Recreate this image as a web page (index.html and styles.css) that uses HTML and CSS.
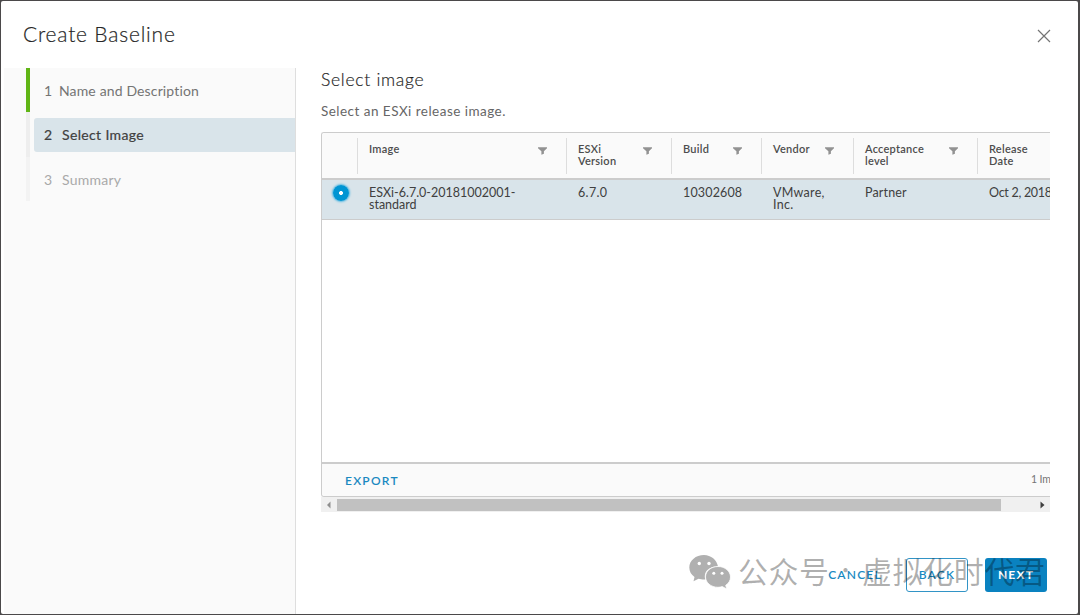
FILE: index.html
```
<!DOCTYPE html>
<html lang="en">
<head>
<meta charset="utf-8">
<title>Create Baseline</title>
<link rel="stylesheet" href="styles.css">
</head>
<body>
<svg width="0" height="0" class="defs">
  <symbol id="filter" viewBox="0 0 9 8"><path d="M0 0.300h9v1L5.900 4.200v2.600L3.400 7.800V4.200L0 1.300z" fill="#929292"/></symbol>
</svg>
<div class="modal">
  <header class="head">
    <h1 class="title">Create Baseline</h1>
    <svg class="close" width="14" height="14" viewBox="0 0 14 14"><path d="M1 1l12 12M13 1L1 13" stroke="#747474" stroke-width="1.2" fill="none"/></svg>
  </header>
  <div class="body">
    <nav class="side">
      <div class="step done"><div class="item"><span class="num">1</span><span class="t-name">Name and Description</span></div></div>
      <div class="step current"><div class="item"><span class="num">2</span><span class="t-select">Select Image</span></div></div>
      <div class="step todo"><div class="item"><span class="num">3</span><span class="t-summary">Summary</span></div></div>
    </nav>
    <main class="main">
      <h2 class="subtitle">Select image</h2>
      <p class="desc">Select an ESXi release image.</p>
      <section class="grid">
        <div class="row thead">
          <div class="cell c0"></div>
          <div class="cell c1"><span>Image</span><svg class="f"><use href="#filter"/></svg></div>
          <div class="cell c2"><span>ESXi<br>Version</span><svg class="f"><use href="#filter"/></svg></div>
          <div class="cell c3"><span>Build</span><svg class="f"><use href="#filter"/></svg></div>
          <div class="cell c4"><span>Vendor</span><svg class="f"><use href="#filter"/></svg></div>
          <div class="cell c5"><span>Acceptance<br>level</span><svg class="f"><use href="#filter"/></svg></div>
          <div class="cell c6"><span>Release<br>Date</span></div>
        </div>
        <div class="row data">
          <div class="cell c0"><i class="radio"></i></div>
          <div class="cell c1"><span>ESXi-6.7.0-20181002001-<br>standard</span></div>
          <div class="cell c2"><span>6.7.0</span></div>
          <div class="cell c3"><span>10302608</span></div>
          <div class="cell c4"><span>VMware,<br>Inc.</span></div>
          <div class="cell c5"><span>Partner</span></div>
          <div class="cell c6"><span>Oct 2, 2018</span></div>
        </div>
        <div class="space"></div>
        <div class="gfoot"><a class="export">EXPORT</a><span class="count">1 Image</span></div>
      </section>
      <div class="scroll">
        <svg width="15" height="15" viewBox="0 0 15 15"><path d="M9.500 4.500v7L6 8z" fill="#8f8f8f"/></svg>
        <div class="thumb"></div>
        <svg width="15" height="15" viewBox="0 0 15 15"><path d="M5.500 4.500v7L9.500 8z" fill="#404040"/></svg>
      </div>
      <footer class="actions">
        <a class="btn cancel">CANCEL</a>
        <a class="btn back">BACK</a>
        <a class="btn next">NEXT</a>
      </footer>
    </main>
  </div>
</div>
<div class="mark">
  <svg width="42" height="35" viewBox="0 0 42 35">
    <path d="M15 0C6.800 0 .3 5.500.3 12.500c0 4 2 7.200 5.200 9.500L4.500 26.200l5-2.400c2 .6 4 .9 6.800.8C14 17 20 11 29 11.500 28 5 22 0 15 0z" fill="#b0b0b0"/>
    <path d="M29 11.500c-7 0-12.500 4.600-12.500 10.400S22 32.300 29 32.300c1.500 0 3-.3 4.300-.7l4.400 2.400-1-3.700c3-2 4.800-4.800 4.800-8.300C41.500 16.300 36 11.500 29 11.500z" fill="#b0b0b0" stroke="#fff" stroke-width=".8"/>
    <g fill="#fff"><circle cx="10.300" cy="8.500" r="1.700"/><circle cx="20" cy="8.500" r="1.700"/><circle cx="24.800" cy="18.300" r="1.500"/><circle cx="33" cy="18.300" r="1.500"/></g>
  </svg>
  <span class="m1">公众号</span><span class="dot">·</span><span class="m2">虚拟化时代君</span>
</div>
</body>
</html>
```
FILE: styles.css
```
* { box-sizing: border-box; }
body { margin: 0; width: 1080px; height: 615px; overflow: hidden; background: #4b494a; padding: 1px 2px 1px 1px; font-family: Lato, "Noto Sans CJK SC", sans-serif; color: #4c4c4c; position: relative; }
.defs { position: absolute; }
.modal { width: 1077px; height: 613px; background: #fff; border-radius: 2px; overflow: hidden; display: flex; flex-direction: column; }
.head { height: 67px; flex: none; display: flex; justify-content: space-between; padding: 20px 27px 0 22px; }
.title { margin: 0; font-size: 21px; line-height: 25px; font-weight: 300; letter-spacing: .8px; color: #222; white-space: nowrap; -webkit-text-stroke: .2px #333; }
.close { margin-top: 8px; }
.body { display: flex; flex: 1; }
.side { width: 292px; margin-left: 3px; background: #fafafa; border-right: 1px solid #dedede; padding-left: 22px; }
.step { height: 44px; border-left: 4px solid #eee; display: flex; align-items: center; padding-left: 4px; font-size: 14px; }
.done { border-color: #60b515; color: #747474; }
.current { height: 45px; color: #404040; }
.todo { border-color: #f3f3f3; color: #a9a9a9; }
.item { flex: 1; height: 34px; display: flex; align-items: center; padding-left: 10px; gap: 10px; border-radius: 3px 0 0 3px; white-space: nowrap; }
.done .item { padding-top: 1px; }
.todo .item { padding-top: 1px; }
.current .item { background: #d9e4ea; }
.current span { -webkit-text-stroke: .2px #404040; }
.num { width: 8px; }
.done .num { width: 5px; }
.t-name { letter-spacing: .14px; }
.t-select { letter-spacing: .35px; }
.t-summary { letter-spacing: .25px; }
.main { flex: 1; min-width: 0; padding: 0 28px 0 25px; }
.subtitle { margin: 0; font-size: 17.500px; line-height: 23px; font-weight: 300; letter-spacing: .72px; color: #222; -webkit-text-stroke: .2px #333; }
.desc { margin: 11px 0 12px; font-size: 13.500px; line-height: 18px; letter-spacing: .47px; color: #666; }
.grid { height: 365px; border: 1px solid #ccc; border-right: 0; border-radius: 3px 0 0 3px; overflow: hidden; display: flex; flex-direction: column; }
.row { display: grid; grid-template-columns: 35px 209px 105px 90px 92px 124px 100px; flex: none; }
.thead { height: 47px; background: #fafafa; border-bottom: 2px solid #ccc; font-size: 11px; line-height: 12px; font-weight: 600; letter-spacing: .25px; color: #4d4d4d; padding-top: 5px; }
.cell { padding-left: 12px; white-space: nowrap; }
.thead .cell { height: 36px; padding-top: 5px; display: flex; justify-content: space-between; align-items: flex-start; border-left: 1px solid #ddd; padding-left: 11px; }
.thead .c0 { border: 0; }
.f { width: 9px; height: 8px; margin: 4px 19px 0 0; }
.data { height: 40px; background: #d9e4ea; border-bottom: 1px solid #ccc; font-size: 12.500px; line-height: 12px; letter-spacing: .16px; color: #404040; padding-top: 7px; }
.data .c0 { padding-left: 11px; }
.data .c1 { letter-spacing: 0; }
.data .c2 { letter-spacing: .35px; }
.data .c4 { letter-spacing: .3px; }
.data .c6 { letter-spacing: -.28px; }
.radio { display: block; width: 16px; height: 16px; margin-top: -2px; border-radius: 50%; background: radial-gradient(circle, #fff 0 1.600px, #0095d3 2.300px); box-shadow: 0 0 2px 1px #55b8e2; }
.space { flex: 1; }
.gfoot { height: 34px; flex: none; border-top: 2px solid #ccc; background: #fafafa; display: flex; justify-content: space-between; padding-left: 23px; overflow: hidden; line-height: 34px; white-space: nowrap; }
.export { font-size: 12px; font-weight: 600; letter-spacing: 1.250px; color: #1a89c1; }
.count { width: 19px; font-size: 10.500px; letter-spacing: -.1px; color: #747474; line-height: 31px; }
.scroll { height: 15px; background: #f0f0f0; display: flex; }
.thumb { width: 664px; height: 12px; margin: 2px 34px 0 1px; background: #c1c1c1; }
.actions { display: flex; margin: 46px 3px 0 0; justify-content: flex-end; }
.btn { height: 34px; border-radius: 3px; font-size: 12px; line-height: 34px; font-weight: 600; letter-spacing: 1.200px; color: #1a89c1; white-space: nowrap; text-align: center; }
.cancel { width: 54px; margin-right: 24px; }
.back { width: 62px; border: 1px solid #3294c6; margin-right: 17px; line-height: 32px; }
.next { width: 62px; background: #0a82c0; color: #fff; font-weight: 700; }
.mark { position: absolute; left: 689px; top: 555px; display: flex; font-family: "Noto Sans CJK SC", sans-serif; font-weight: 400; font-size: 30px; line-height: 30px; color: rgba(0,0,0,.31); white-space: nowrap; }
.mark svg { flex: none; }
.m1 { margin-left: 7px; width: 91px; letter-spacing: .5px; }
.dot { width: 33px; text-align: center; font-size: 20px; }
.m2 { letter-spacing: .6px; }
```
